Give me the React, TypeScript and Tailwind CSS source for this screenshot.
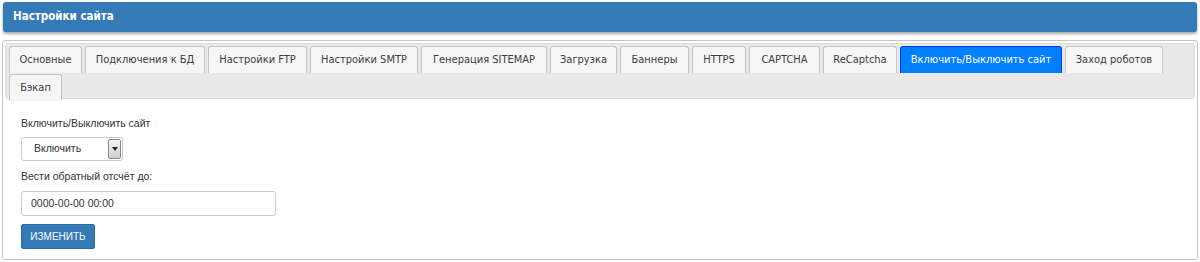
import React from "react";

const tabs: { label: string; w: number; active?: boolean }[] = [
  { label: "Основные", w: 73 },
  { label: "Подключения к БД", w: 120 },
  { label: "Настройки FTP", w: 99 },
  { label: "Настройки SMTP", w: 108 },
  { label: "Генерация SITEMAP", w: 126 },
  { label: "Загрузка", w: 67 },
  { label: "Баннеры", w: 69 },
  { label: "HTTPS", w: 54 },
  { label: "CAPTCHA", w: 71 },
  { label: "ReCaptcha", w: 74 },
  { label: "Включить/Выключить сайт", w: 162, active: true },
  { label: "Заход роботов", w: 98 },
  { label: "Бэкап", w: 53 },
];

const tabFont = { fontFamily: '"DejaVu Sans Condensed", "DejaVu Sans", Verdana, sans-serif' };

export default function App() {
  return (
    <div className="w-[1200px] h-[262px] bg-white overflow-hidden px-[2px] pt-[2px]" style={{ fontFamily: '"Liberation Sans", Arial, sans-serif' }}>
      <div className="mx-[1px] h-[30px] bg-[#337ab7] rounded-[3px] shadow-[0_2px_3px_rgba(0,0,0,0.35)] flex items-center pl-[10px]">
        <span className="text-white font-bold text-[11.5px]" style={tabFont}>Настройки сайта</span>
      </div>
      <div className="mt-[8px] h-[220px] border border-[#c5c5c5] rounded-[3px] p-[2px]">
        <div className="bg-[#e9e9e9] border border-[#dddddd] rounded-[3px] pl-[3px] pr-[3px] pt-[1px] flex flex-wrap h-[56px]">
          {tabs.map((t) => (
            <div
              key={t.label}
              style={{ width: t.w, ...tabFont }}
              className={
                "mt-[1px] mr-[3px] h-[27px] flex items-center justify-center text-[11px] border border-b-0 rounded-t-[3px] " +
                (t.active
                  ? "bg-[#007fff] border-[#003eff] text-white"
                  : "bg-[#f6f6f6] border-[#c5c5c5] text-[#3c3c3c]")
              }
            >
              {t.label}
            </div>
          ))}
        </div>
        <div className="pl-[16px] pt-[16px] text-[10.5px] text-[#333333]">
          <div className="h-[17px] leading-[17px]">Включить/Выключить сайт</div>
          <div className="mt-[5px] w-[102px] h-[24px] border border-[#cccccc] rounded-[3px] flex items-center justify-between bg-white">
            <span className="pl-[12px]">Включить</span>
            <span className="mr-[1px] w-[13px] h-[20px] border border-[#888888] rounded-[2px] bg-gradient-to-b from-[#f4f4f4] to-[#cfcfcf] flex items-center justify-center">
              <svg width="6" height="4" viewBox="0 0 6 4"><path d="M0 0h6L3 4z" fill="#222" /></svg>
            </span>
          </div>
          <div className="mt-[7px] h-[17px] leading-[17px]">Вести обратный отсчёт до:</div>
          <div className="mt-[6px] w-[255px] h-[25px] border border-[#cccccc] rounded-[3px] flex items-center pl-[9px] text-[10.5px]">0000-00-00 00:00</div>
          <div className="mt-[8px] w-[74px] h-[25px] bg-[#337ab7] border border-[#2e6da4] rounded-[2px] text-white flex items-center justify-center text-[10px]">ИЗМЕНИТЬ</div>
        </div>
      </div>
    </div>
  );
}
